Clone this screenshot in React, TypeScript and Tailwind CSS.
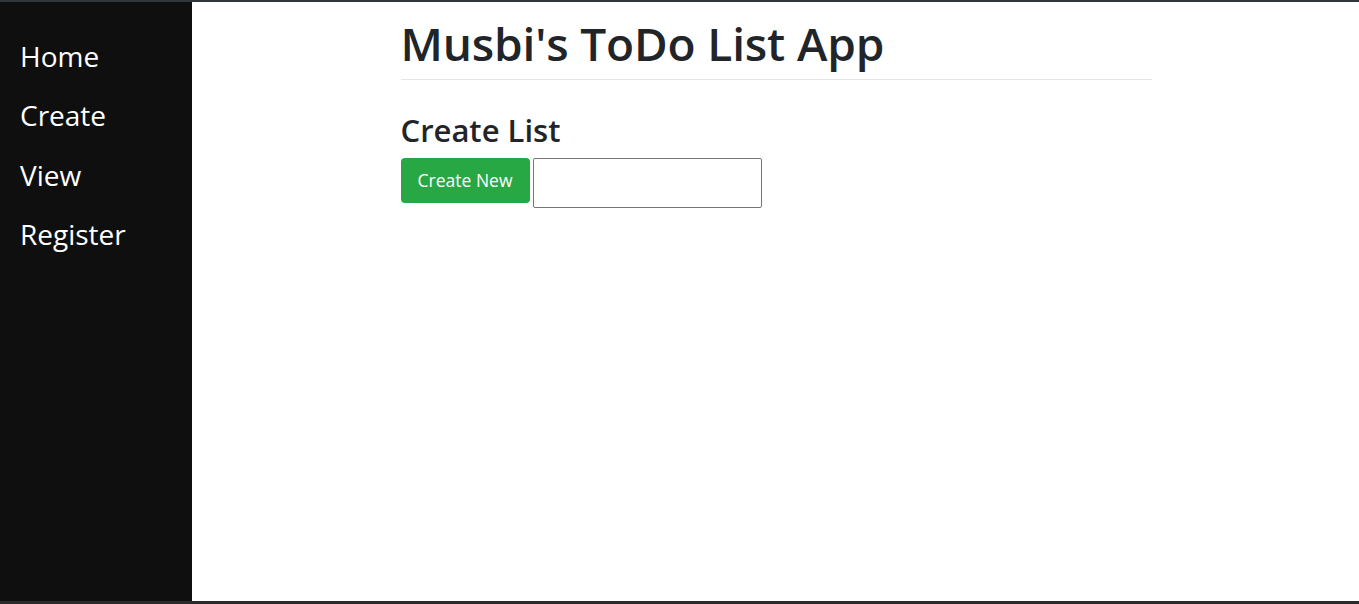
import React from "react";

export default function App() {
  const font = { fontFamily: '"Open Sans", "Noto Sans", sans-serif' };
  return (
    <div className="w-[1359px] h-[604px] flex flex-col bg-white overflow-hidden" style={font}>
      <div className="h-[2px] bg-[#31363a] shrink-0" />
      <div className="flex flex-1 min-h-0">
        <nav className="w-[192px] bg-[#0f0f0f] shrink-0 flex flex-col pt-[25px] pl-[20px]">
          {["Home", "Create", "View", "Register"].map((t) => (
            <a key={t} className="text-white text-[28px] leading-[59.4px]">
              {t}
            </a>
          ))}
        </nav>
        <main className="flex-1 flex justify-center">
          <div className="w-[751px] ml-[1px]">
            <h1 className="text-[#212529] text-[46px] leading-[57px] mt-[13px] font-semibold tracking-[-0.15px]">
              Musbi's ToDo List App
            </h1>
            <div className="h-px bg-[#e5e5e5] mt-[7px]" />
            <h3 className="text-[#212529] text-[31px] leading-[38px] mt-[31px] font-semibold">
              Create List
            </h3>
            <div className="flex items-start gap-[3px] mt-[9px]">
              <button className="bg-[#28a745] text-white text-[17.5px] h-[45px] w-[129px] rounded-[4px]">
                Create New
              </button>
              <input className="w-[229px] h-[50px] border border-[#767676] rounded-[2px]" />
            </div>
          </div>
        </main>
      </div>
      <div className="h-[3px] bg-[#2b2b2b] shrink-0" />
    </div>
  );
}
